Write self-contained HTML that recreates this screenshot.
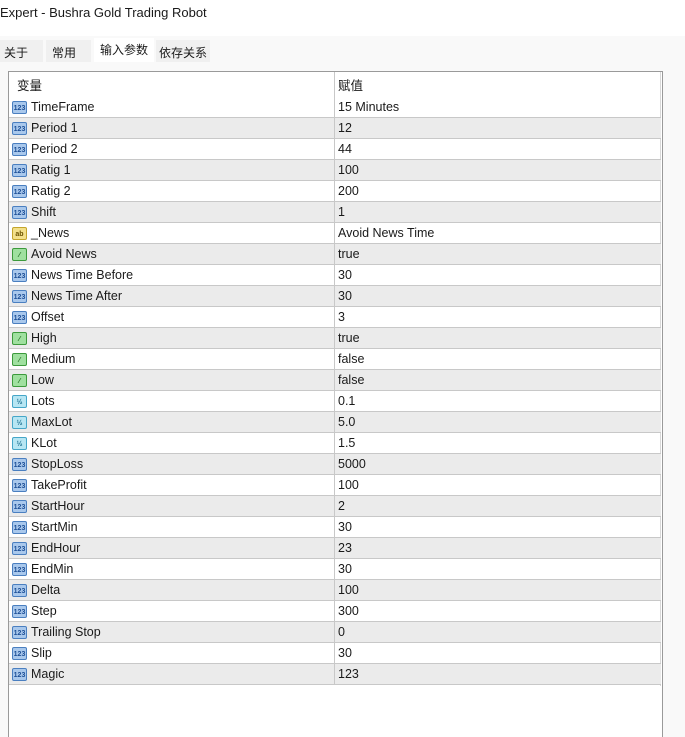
<!DOCTYPE html>
<html style="width:685px;height:737px;overflow:hidden"><head><meta charset="utf-8"><style>
*{margin:0;padding:0;box-sizing:border-box}
body{width:685px;height:737px;background:#f9f9f9;font-family:"Liberation Sans","Noto Sans CJK SC",sans-serif;font-size:12.5px;color:#1a1a1a;position:relative;overflow:hidden}
.title{position:absolute;left:0;top:0;width:685px;height:36px;background:#fff;padding:5px 0 0 0;font-size:13px}
.tabs{position:absolute;top:38px;left:0;height:24px;width:685px;background:#f9f9f9}
.tab{position:absolute;top:2px;height:22px;background:#f0f0f0;padding:4px 0 0 4px;font-size:12px}
.tab.a{background:#fff;top:0;height:24px;padding-top:3px;padding-left:6px}
.tbl{position:absolute;left:8px;top:71px;width:655px;height:670px;background:#fff;border:1px solid #9a9a9a;border-bottom:none}
.row{position:absolute;left:0;width:652px;height:21px;border-bottom:1px solid #c8c8c8}
.row.g{background:#ebebeb}
.c1{position:absolute;left:22px;top:3px}
.c2{position:absolute;left:329px;top:3px}
.div{position:absolute;left:325px;top:0;width:1px;height:100%;background:#c8c8c8}
.hdr{position:absolute;left:0;top:0;width:652px;height:25px}
.hdr .c1{left:8px;top:3px}.hdr .c2{top:3px}
.ic{position:absolute;left:3px;top:4px;width:15px;height:13px;border-radius:2px;font-size:7px;line-height:13px;text-align:center;font-weight:bold}
.n{background:#a9c8ec;border:1px solid #4a7fc0;color:#1d4f96}
.b{background:#9fe09f;border:1px solid #3c9a3c;color:#1c6b1c}
.s{background:#f3e08a;border:1px solid #c4a52c;color:#6b5200}
.d{background:#b7e6f3;border:1px solid #45a6c8;color:#1b6f8f}
.vr{position:absolute;left:651px;top:0;width:1px;height:614px;background:#d8d8d8}
</style></head><body>
<div class="title">Expert - Bushra Gold Trading Robot</div>
<div class="tabs">
<div class="tab" style="left:0;width:43px">关于</div>
<div class="tab" style="left:46px;width:45px;padding-left:6px">常用</div>
<div class="tab a" style="left:94px;width:60px">输入参数</div>
<div class="tab" style="left:156px;width:54px;padding-left:3px">依存关系</div>
</div>
<div class="tbl">
<div class="hdr"><span class="c1">变量</span><div class="div" style="height:25px"></div><span class="c2">赋值</span></div>
<div class="vr"></div>
<div id="rows"></div>
</div>
<script>
var d=[["n","TimeFrame","15 Minutes"],["n","Period 1","12"],["n","Period 2","44"],["n","Ratig 1","100"],["n","Ratig 2","200"],["n","Shift","1"],["s","_News","Avoid News Time"],["b","Avoid News","true"],["n","News Time Before","30"],["n","News Time After","30"],["n","Offset","3"],["b","High","true"],["b","Medium","false"],["b","Low","false"],["d","Lots","0.1"],["d","MaxLot","5.0"],["d","KLot","1.5"],["n","StopLoss","5000"],["n","TakeProfit","100"],["n","StartHour","2"],["n","StartMin","30"],["n","EndHour","23"],["n","EndMin","30"],["n","Delta","100"],["n","Step","300"],["n","Trailing Stop","0"],["n","Slip","30"],["n","Magic","123"]];
var h="";var lab={n:"123",b:"⁄",s:"ab",d:"½"};
d.forEach(function(r,i){h+='<div class="row'+(i%2?' g':'')+'" style="top:'+(25+i*21)+'px"><span class="ic '+r[0]+'">'+lab[r[0]]+'</span><span class="c1">'+r[1]+'</span><div class="div"></div><span class="c2">'+r[2]+'</span></div>';});
document.getElementById("rows").outerHTML=h;
</script>
</body></html>
